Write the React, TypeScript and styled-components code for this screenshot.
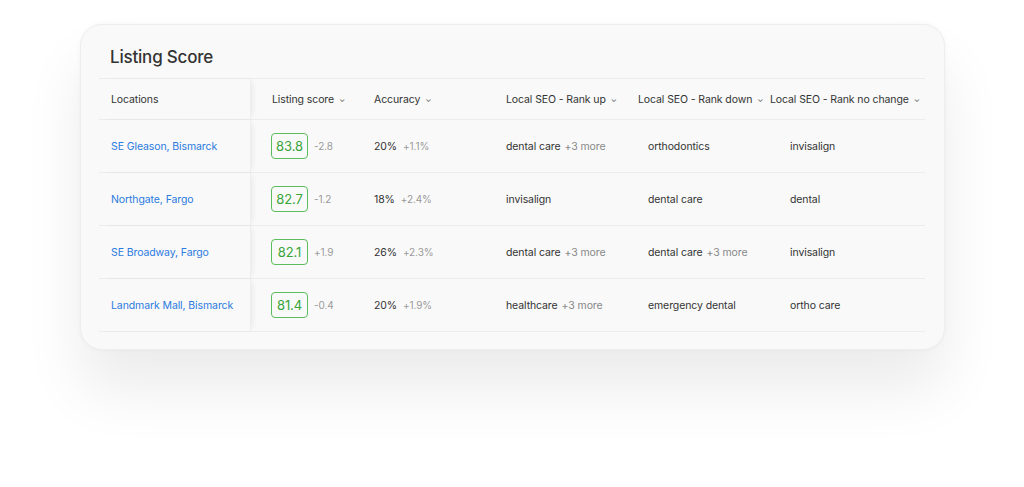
import React from "react";
import styled, { createGlobalStyle } from "styled-components";

const Global = createGlobalStyle`
  html, body { margin: 0; background: #fff; }
  body { font-family: Inter, "Open Sans", sans-serif; }
`;

const Page = styled.div`
  width: 1024px; height: 487px; box-sizing: border-box;
  padding: 24px 79px 0 80px;
`;

const Card = styled.div`
  background: #f9f9f9;
  border: 1px solid #eeeeee;
  border-radius: 22px;
  box-shadow: 0 40px 60px rgba(0,0,0,0.08), 0 0 4px rgba(0,0,0,0.04);
  padding: 22px 19px 18px 18px;
  height: 326px; box-sizing: border-box;
`;

const Title = styled.h1`
  margin: 0 0 11px 11px; font-size: 17px; font-weight: 500; color: #333; letter-spacing: -0.2px;
`;

const cols = "152px 102px 132px 133px 132px 1fr";

const Row = styled.div<{ $head?: boolean }>`
  display: grid; grid-template-columns: ${cols};
  height: ${p => (p.$head ? 40 : 52)}px;
  border-top: 1px solid #ececec;
  &:last-child { border-bottom: 1px solid #ececec; }
`;

const Cell = styled.div<{ $first?: boolean; $pad?: number }>`
  display: flex; align-items: center; gap: 6px; white-space: nowrap; min-width: 0;
  padding-left: ${p => p.$pad ?? 0}px;
  font-size: 10.5px; color: #333; letter-spacing: -0.1px;
  ${p => p.$first && `box-shadow: 4px 0 6px -3px rgba(0,0,0,0.08); border-right: 1px solid #eee;`}
`;

const HeadText = styled.span`font-size: 10.5px; color: #333;`;
const Chev = styled.span`font-size: 8px; color: #666; margin-left: -1px;`;
const Link = styled.span`color: #2b7be0; font-size: 10.5px;`;
const Score = styled.span`
  border: 1.5px solid #5cbd5c; border-radius: 4px; color: #3aa53a;
  font-size: 13px; width: 35px; height: 24px; display: flex; align-items: center; justify-content: center;
`;
const Muted = styled.span`color: #999; font-size: 10px;`;
const More = styled.span`color: #888; font-size: 10.5px; margin-left: -2px;`;

const rows = [
  ["SE Gleason, Bismarck", "83.8", "-2.8", "20%", "+1.1%", ["dental care", true], ["orthodontics", false], "invisalign"],
  ["Northgate, Fargo", "82.7", "-1.2", "18%", "+2.4%", ["invisalign", false], ["dental care", false], "dental"],
  ["SE Broadway, Fargo", "82.1", "+1.9", "26%", "+2.3%", ["dental care", true], ["dental care", true], "invisalign"],
  ["Landmark Mall, Bismarck", "81.4", "-0.4", "20%", "+1.9%", ["healthcare", true], ["emergency dental", false], "ortho care"],
] as const;

const Head = ({ t }: { t: string }) => (<><HeadText>{t}</HeadText><Chev>⌄</Chev></>);

export default function App() {
  return (
    <Page>
      <Global />
      <Card>
        <Title>Listing Score</Title>
        <div>
          <Row $head>
            <Cell $first $pad={12}><HeadText>Locations</HeadText></Cell>
            <Cell $pad={21}><Head t="Listing score" /></Cell>
            <Cell $pad={21}><Head t="Accuracy" /></Cell>
            <Cell $pad={21}><Head t="Local SEO - Rank up" /></Cell>
            <Cell $pad={20}><Head t="Local SEO - Rank down" /></Cell>
            <Cell $pad={20}><Head t="Local SEO - Rank no change" /></Cell>
          </Row>
          {rows.map(r => (
            <Row key={r[0]}>
              <Cell $first $pad={12}><Link>{r[0]}</Link></Cell>
              <Cell $pad={20}><Score>{r[1]}</Score><Muted>{r[2]}</Muted></Cell>
              <Cell $pad={21}><span>{r[3]}</span><Muted>{r[4]}</Muted></Cell>
              <Cell $pad={21}><span>{r[5][0]}</span>{r[5][1] && <More>+3 more</More>}</Cell>
              <Cell $pad={30}><span>{r[6][0]}</span>{r[6][1] && <More>+3 more</More>}</Cell>
              <Cell $pad={40}><span>{r[7]}</span></Cell>
            </Row>
          ))}
        </div>
      </Card>
    </Page>
  );
}
